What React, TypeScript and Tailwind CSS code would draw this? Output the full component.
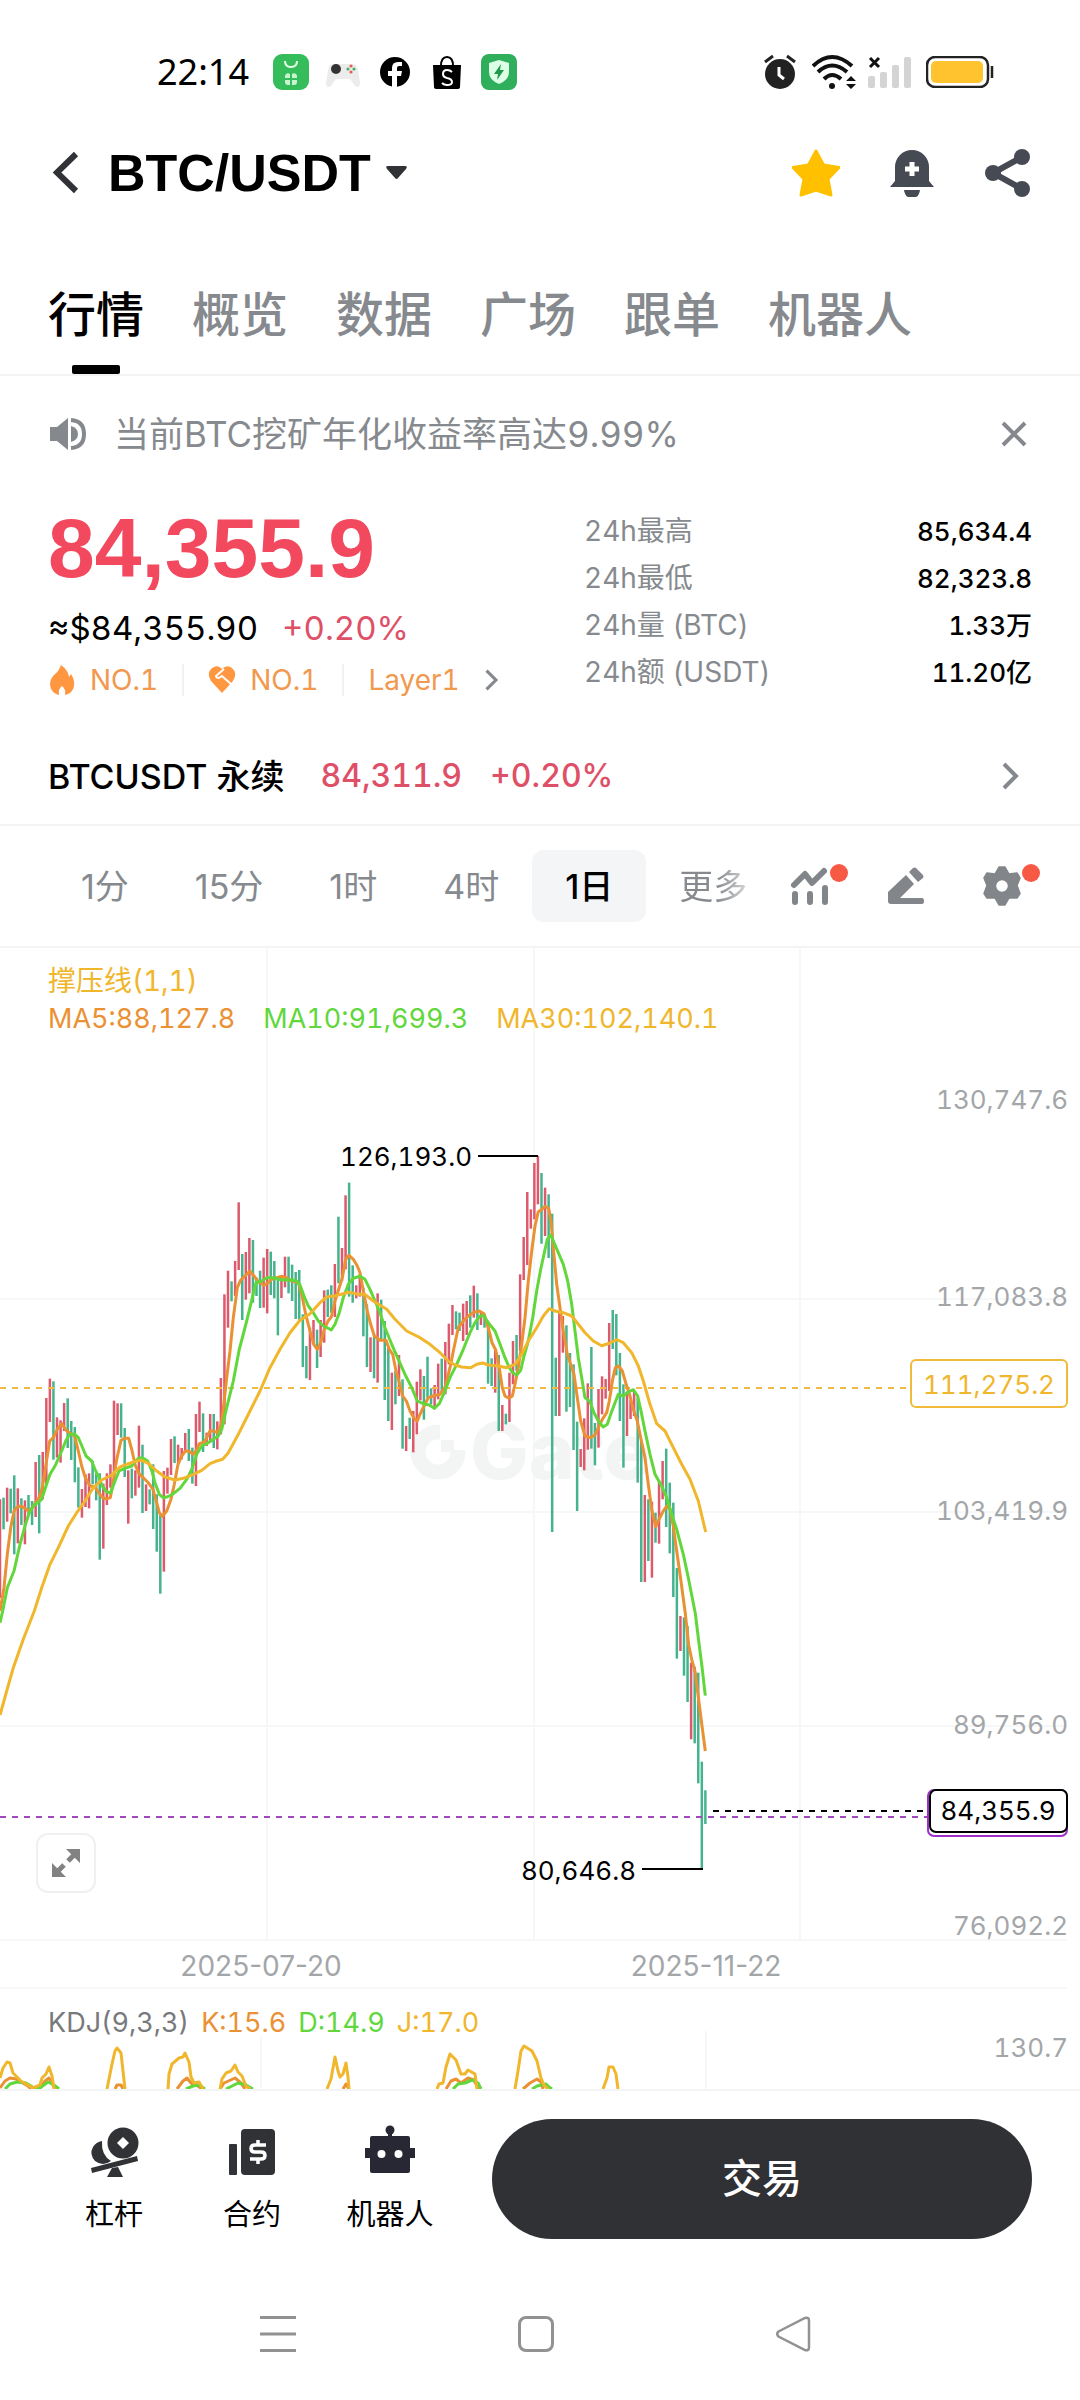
import { useState } from "react";
import clsx from "clsx";

type Point = [number, number];

// [high, low, up] per day, in plot units (3 units = 1px on a 1080 wide chart)
type Candle = [number, number, 0 | 1];

const CANDLES: Candle[] = [
  [1105, 1400, 1], [1100, 1195, 0], [1070, 1172, 1], [1073, 1147, 0], [1033, 1270, 0], [1072, 1237, 1],
  [1102, 1182, 0], [1108, 1240, 1], [1092, 1150, 0], [1110, 1182, 0], [993, 1158, 1], [972, 1207, 0],
  [963, 1105, 1], [801, 1060, 1], [743, 873, 1], [751, 986, 0], [859, 980, 1], [868, 995, 1],
  [816, 900, 1], [802, 951, 0], [870, 987, 0], [888, 1054, 0], [1009, 1130, 0], [1074, 1160, 1],
  [1030, 1128, 1], [1027, 1132, 1], [990, 1060, 0], [1027, 1108, 0], [1027, 1286, 0], [1058, 1253, 1],
  [1027, 1122, 1], [1000, 1070, 1], [809, 1030, 1], [817, 912, 1], [817, 920, 0], [891, 1038, 0],
  [1018, 1178, 1], [1013, 1102, 0], [1018, 1094, 1], [884, 1070, 1], [941, 1146, 0], [1060, 1140, 1],
  [1075, 1120, 0], [1000, 1194, 0], [1090, 1262, 0], [1150, 1388, 0], [1020, 1322, 1], [1010, 1088, 1],
  [924, 1032, 1], [916, 996, 0], [941, 1000, 1], [951, 985, 1], [906, 965, 1], [894, 990, 0],
  [950, 1058, 0], [849, 1065, 1], [812, 903, 1], [847, 963, 0], [905, 945, 1], [849, 935, 1],
  [849, 951, 0], [871, 955, 1], [741, 910, 1], [490, 880, 1], [419, 590, 1], [451, 511, 0],
  [390, 495, 1], [214, 417, 1], [369, 567, 0], [363, 506, 1], [321, 487, 1], [327, 515, 0],
  [440, 495, 0], [419, 531, 0], [380, 530, 1], [354, 547, 1], [362, 492, 0], [390, 502, 0],
  [440, 613, 0], [440, 501, 1], [377, 469, 1], [377, 487, 0], [401, 510, 0], [423, 564, 0],
  [417, 566, 0], [550, 708, 0], [645, 742, 0], [590, 747, 1], [567, 640, 1], [596, 711, 0],
  [567, 678, 1], [478, 635, 1], [476, 558, 0], [463, 545, 0], [399, 558, 1], [257, 457, 0],
  [351, 450, 1], [193, 415, 1], [155, 497, 0], [403, 515, 0], [463, 502, 1], [430, 497, 1],
  [470, 616, 0], [520, 708, 0], [619, 723, 1], [610, 742, 0], [487, 755, 1], [506, 630, 0],
  [570, 807, 0], [650, 870, 0], [725, 897, 1], [720, 820, 0], [672, 795, 1], [745, 953, 0],
  [885, 960, 1], [860, 924, 0], [840, 964, 1], [752, 910, 1], [715, 808, 1], [735, 866, 0],
  [677, 800, 0], [772, 820, 0], [762, 835, 1], [698, 805, 1], [683, 785, 0], [633, 790, 1],
  [578, 700, 1], [522, 612, 1], [541, 595, 0], [545, 600, 0], [518, 630, 1], [510, 612, 1],
  [493, 590, 0], [464, 560, 1], [487, 597, 0], [545, 582, 1], [550, 590, 0], [580, 758, 0],
  [682, 765, 0], [655, 785, 1], [672, 900, 0], [822, 900, 1], [848, 880, 0], [725, 873, 1],
  [630, 760, 1], [612, 720, 0], [430, 660, 1], [318, 447, 1], [183, 402, 1], [235, 293, 1],
  [96, 265, 1], [75, 220, 1], [126, 338, 0], [170, 315, 1], [190, 381, 0], [248, 1203, 0],
  [680, 855, 0], [540, 855, 1], [555, 665, 1], [583, 842, 0], [666, 828, 0], [700, 957, 0],
  [872, 1140, 0], [954, 1008, 1], [862, 1018, 1], [757, 956, 1], [648, 953, 0], [876, 1003, 0],
  [774, 950, 1], [736, 850, 1], [744, 803, 1], [576, 780, 1], [537, 654, 0], [549, 733, 0],
  [666, 870, 0], [760, 1010, 0], [782, 915, 1], [808, 864, 1], [780, 855, 1], [800, 1055, 0],
  [930, 1353, 0], [1092, 1353, 1], [1105, 1290, 0], [1112, 1340, 1], [1145, 1235, 0], [1050, 1238, 1],
  [990, 1105, 1], [953, 1188, 0], [1055, 1267, 0], [1115, 1398, 0], [1311, 1583, 0], [1455, 1560, 1],
  [1459, 1634, 0], [1485, 1713, 0], [1595, 1825, 1], [1607, 1837, 0], [1625, 1957, 0], [1892, 2213, 0],
  [1978, 2079, 0],
];

const MA5: Point[] = [
  [0, 1440], [12, 1370], [22, 1270], [32, 1190], [42, 1140], [52, 1128], [63, 1125], [75, 1132], [88, 1142],
  [100, 1125], [117, 1100], [127, 1070], [138, 1000], [149, 930], [160, 920], [172, 895], [185, 878],
  [200, 900], [213, 908], [224, 915], [235, 960], [245, 1005], [256, 1040], [270, 1065], [285, 1068],
  [296, 1085], [308, 1100], [320, 1104], [331, 1100], [338, 1060], [350, 985], [363, 928], [374, 922],
  [386, 922], [395, 955], [405, 1000], [417, 1028], [430, 1040], [445, 1055], [459, 1075], [470, 1115],
  [478, 1145], [487, 1156], [500, 1140], [513, 1105], [523, 1060], [534, 1000], [545, 975], [556, 960],
  [566, 960], [580, 970], [588, 960], [598, 938], [612, 934], [620, 920], [630, 900], [641, 900],
  [652, 905], [662, 885], [668, 850], [680, 740], [690, 660], [700, 560], [712, 470], [722, 447],
  [738, 432], [750, 420], [762, 435], [775, 452], [793, 463], [805, 455], [815, 445], [830, 440],
  [845, 436], [860, 440], [870, 448], [885, 452], [895, 455], [905, 490], [917, 550], [930, 600],
  [941, 640], [952, 655], [962, 635], [973, 595], [984, 570], [994, 558], [1005, 510], [1016, 475],
  [1027, 440], [1037, 385], [1047, 373], [1060, 385], [1072, 405], [1080, 425], [1090, 480], [1102, 540],
  [1112, 580], [1123, 615], [1140, 628], [1158, 628], [1168, 655], [1178, 670], [1188, 720], [1198, 755],
  [1208, 795], [1220, 812], [1230, 840], [1242, 862], [1252, 870], [1260, 850], [1272, 825], [1285, 800],
  [1300, 795], [1320, 790], [1335, 768], [1350, 710], [1362, 650], [1375, 590], [1390, 570], [1405, 555],
  [1422, 544], [1438, 540], [1452, 548], [1465, 590], [1476, 635], [1487, 657], [1497, 705], [1507, 770],
  [1515, 795], [1527, 802], [1537, 795], [1545, 760], [1555, 710], [1565, 640], [1575, 560], [1585, 450],
  [1595, 360], [1605, 285], [1615, 242], [1626, 235], [1635, 226], [1646, 232], [1653, 270], [1660, 350],
  [1670, 460], [1680, 530], [1690, 600], [1702, 670], [1712, 700], [1722, 730], [1732, 800], [1742, 870],
  [1755, 915], [1770, 920], [1785, 912], [1795, 890], [1807, 865], [1820, 845], [1828, 810], [1838, 745],
  [1846, 710], [1856, 705], [1867, 720], [1877, 755], [1890, 795], [1900, 835], [1912, 870], [1922, 920],
  [1935, 980], [1945, 1060], [1955, 1135], [1967, 1187], [1977, 1165], [1990, 1140], [2000, 1125],
  [2010, 1135], [2020, 1185], [2030, 1260], [2042, 1345], [2056, 1447], [2066, 1542], [2076, 1589],
  [2086, 1625], [2096, 1708], [2106, 1785], [2116, 1860],
];

const MA10: Point[] = [
  [0, 1475], [8, 1440], [22, 1370], [42, 1320], [60, 1240], [75, 1185], [88, 1145], [100, 1125], [125, 1105],
  [138, 1065], [150, 1030], [165, 1005], [185, 960], [197, 930], [208, 912], [222, 908], [235, 920],
  [247, 948], [258, 975], [275, 990], [285, 1015], [297, 1040], [307, 1065], [320, 1083], [332, 1085],
  [345, 1050], [357, 1020], [375, 1012], [395, 1005], [405, 992], [417, 980], [430, 982], [443, 990],
  [455, 1018], [465, 1055], [478, 1090], [490, 1100], [503, 1097], [520, 1088], [540, 1072], [560, 1045],
  [575, 1015], [590, 970], [605, 945], [620, 938], [640, 925], [655, 915], [665, 895], [680, 830],
  [700, 750], [718, 655], [740, 570], [757, 500], [768, 455], [785, 450], [800, 440], [820, 440],
  [845, 447], [870, 446], [890, 450], [900, 462], [912, 495], [925, 525], [940, 545], [955, 570],
  [970, 585], [985, 592], [994, 597], [1005, 580], [1018, 545], [1030, 500], [1045, 460], [1060, 442],
  [1080, 436], [1095, 445], [1110, 475], [1125, 510], [1140, 545], [1155, 590], [1175, 640], [1195, 685],
  [1215, 730], [1235, 770], [1252, 810], [1270, 818], [1288, 822], [1303, 832], [1318, 818], [1335, 780],
  [1350, 740], [1370, 700], [1390, 655], [1410, 605], [1425, 575], [1438, 557], [1450, 553], [1465, 575],
  [1485, 600], [1500, 640], [1515, 680], [1528, 710], [1538, 725], [1550, 732], [1562, 718], [1572, 675],
  [1585, 630], [1598, 560], [1610, 480], [1622, 415], [1632, 370], [1642, 325], [1652, 312], [1662, 335],
  [1675, 365], [1690, 400], [1703, 450], [1715, 520], [1725, 600], [1735, 680], [1745, 740], [1755, 800],
  [1770, 812], [1782, 845], [1795, 870], [1810, 888], [1822, 880], [1832, 850], [1845, 815], [1855, 790],
  [1870, 795], [1885, 783], [1900, 776], [1913, 795], [1923, 840], [1935, 900], [1950, 970], [1965, 1030],
  [1985, 1065], [2000, 1100], [2015, 1150], [2030, 1195], [2050, 1270], [2065, 1340], [2086, 1447],
  [2096, 1530], [2106, 1607], [2116, 1694],
];

const MA30: Point[] = [
  [0, 1752], [20, 1680], [40, 1610], [70, 1525], [103, 1440], [125, 1370], [150, 1300], [175, 1250],
  [205, 1185], [230, 1145], [255, 1110], [280, 1070], [305, 1047], [335, 1032], [360, 1008], [385, 998],
  [410, 990], [425, 988], [445, 997], [470, 1020], [495, 1038], [525, 1047], [550, 1042], [580, 1030],
  [605, 1018], [630, 998], [650, 990], [668, 985], [685, 965], [715, 910], [750, 840], [780, 780],
  [810, 710], [840, 655], [870, 605], [900, 568], [930, 548], [960, 515], [980, 498], [1005, 494],
  [1030, 488], [1045, 484], [1075, 490], [1095, 490], [1120, 510], [1160, 535], [1185, 565], [1220, 600],
  [1260, 620], [1290, 640], [1320, 665], [1345, 690], [1365, 702], [1385, 708], [1412, 710], [1430, 700],
  [1448, 696], [1465, 702], [1495, 705], [1520, 710], [1545, 700], [1565, 670], [1585, 630], [1610, 590],
  [1630, 555], [1648, 533], [1665, 540], [1690, 545], [1715, 555], [1735, 580], [1755, 605], [1780, 630],
  [1805, 644], [1830, 636], [1850, 626], [1870, 635], [1895, 665], [1915, 705], [1930, 750], [1950, 820],
  [1970, 878], [1995, 900], [2020, 950], [2045, 1000], [2070, 1045], [2095, 1110], [2117, 1203],
];

// KDJ leaves the visible strip several times, so every curve is a list of runs
const KDJ_J: Point[][] = [
  [[0, 125], [3, 115], [7, 109], [10, 110], [13, 120], [17, 124], [21, 128], [28, 132], [33, 135], [40, 132], [42, 125], [46, 121], [49, 114], [52, 123], [54, 136]],
  [[107, 136], [112, 111], [115, 98], [117, 95], [121, 100], [123, 118], [125, 136]],
  [[168, 136], [169, 121], [172, 111], [179, 105], [183, 104], [185, 100], [189, 109], [191, 124], [194, 130], [199, 129], [203, 136]],
  [[220, 136], [222, 126], [226, 120], [231, 118], [235, 112], [238, 119], [242, 123], [246, 133], [250, 136]],
  [[327, 136], [331, 126], [335, 104], [338, 118], [340, 124], [343, 121], [346, 110], [348, 124], [349, 136]],
  [[437, 136], [439, 131], [443, 130], [446, 114], [450, 101], [456, 107], [461, 121], [465, 121], [468, 117], [475, 121], [477, 136]],
  [[515, 136], [518, 118], [521, 98], [524, 93], [532, 98], [537, 108], [541, 125], [544, 132], [548, 136]],
  [[603, 136], [607, 125], [609, 114], [613, 114], [616, 121], [618, 136]],
];

const KDJ_K: Point[][] = [
  [[0, 135], [5, 128], [10, 125], [16, 126], [21, 129], [28, 133], [31, 136]],
  [[39, 136], [45, 128], [49, 125], [52, 130], [55, 136]],
  [[115, 136], [117, 132], [121, 132], [123, 136]],
  [[177, 136], [183, 128], [187, 125], [191, 130], [198, 133], [202, 136]],
  [[220, 136], [224, 130], [235, 125], [241, 130], [245, 136]],
  [[343, 136], [346, 131], [349, 136]],
  [[446, 136], [451, 128], [456, 126], [461, 130], [468, 125], [474, 127], [477, 133], [479, 136]],
  [[523, 136], [530, 130], [537, 126], [541, 129], [543, 136]],
];

const KDJ_D: Point[][] = [
  [[5, 136], [10, 131], [17, 129], [26, 130], [31, 133], [34, 135], [40, 135], [48, 129], [54, 132], [59, 136]],
  [[186, 136], [193, 133], [199, 132], [205, 136]],
  [[226, 136], [238, 130], [246, 132], [253, 136]],
  [[453, 136], [458, 131], [465, 130], [472, 127], [478, 130], [481, 136]],
  [[532, 136], [537, 133], [546, 131], [549, 134], [552, 136]],
];

const TABS = ["行情", "概览", "数据", "广场", "跟单", "机器人"];
const PERIODS = ["1分", "15分", "1时", "4时", "1日", "更多"];

const STATS = [
  { label: "24h最高", value: "85,634.4" },
  { label: "24h最低", value: "82,323.8" },
  { label: "24h量 (BTC)", value: "1.33万" },
  { label: "24h额 (USDT)", value: "11.20亿" },
];

const AXIS = [
  { y: 152, label: "130,747.6" },
  { y: 349, label: "117,083.8" },
  { y: 563, label: "103,419.9" },
  { y: 777, label: "89,756.0" },
  { y: 978, label: "76,092.2" },
];

const CANDLE_STEP = 3.5625;
const plotY = (v: number) => 183 + v / 3;
const toPoints = (points: Point[]) =>
  points.map(([x, y]) => `${(x / 3).toFixed(1)},${plotY(y).toFixed(1)}`).join(" ");
const toRun = (points: Point[]) => points.map(([x, y]) => `${x},${y - 60}`).join(" ");

const StatusBar = () => (
  <div className="flex h-36 items-center justify-between pr-[86px] pl-[157px]">
    <div className="flex items-center">
      <span className="font-['Noto_Sans','Noto_Sans_CJK_SC',sans-serif] text-[36px] leading-9">22:14</span>
      <svg className="ml-6 h-9 w-9" viewBox="0 0 36 36">
        <rect width="36" height="36" rx="9" fill="#35bd5b" />
        <path d="M12 7q0 6 6 6t6-6" fill="none" stroke="#e6ffe9" strokeWidth="2" />
        <path d="M12 24v-2a3 3 0 0 1 5-2v4zM19 24v-4a3 3 0 0 1 5 2v2zM12 26h5v5h-2a3 3 0 0 1-3-3zM19 26h5v2a3 3 0 0 1-3 3h-2z" fill="#c8f5cf" />
      </svg>
      <svg className="ml-4 h-9 w-9" viewBox="0 0 36 36">
        <path d="M8 10h20q4 0 5 6l2 13q0 4-3 4-2 0-4-4l-3-4H11l-3 4q-2 4-4 4-3 0-3-4l2-13q1-6 5-6z" fill="#ececed" />
        <circle cx="11" cy="15" r="5" fill="#333" />
        <circle cx="26" cy="12" r="1.6" fill="#e8604c" />
        <circle cx="26" cy="18" r="1.6" fill="#e8604c" />
        <circle cx="23" cy="15" r="1.6" fill="#45b06a" />
        <circle cx="29" cy="15" r="1.6" fill="#45b06a" />
      </svg>
      <svg className="ml-[18px] h-8 w-8" viewBox="0 0 32 32">
        <circle cx="16" cy="16" r="15" fill="#000" />
        <path d="M13 31V20H9v-5h4v-3q0-6 6-6h4v4h-3q-2 0-2 2v3h5l-1 5h-4v11z" fill="#fff" />
      </svg>
      <svg className="ml-5 h-9 w-8" viewBox="0 0 32 36">
        <path d="M2 11h28l-1 22q0 2-3 2H6q-3 0-3-2z" fill="#000" />
        <path d="M10 12q0-9 6-9t6 9" fill="none" stroke="#000" strokeWidth="2" />
        <path d="M21 18q-2-2-5-2-4 0-4 4 0 3 4 4 5 1 5 4 0 3-5 3-3 0-5-2" fill="none" stroke="#fff" strokeWidth="2" />
      </svg>
      <svg className="ml-[18px] h-9 w-9" viewBox="0 0 36 36">
        <rect width="36" height="36" rx="8" fill="#2fae5c" />
        <path d="M18 6l10 3v9q0 8-10 12Q8 26 8 18V9z" fill="#dcffe6" />
        <path d="M20 10l-7 10h4l-1 6 7-10h-4z" fill="#1f9a4c" />
      </svg>
    </div>

    <div className="flex items-center">
      <svg className="h-9 w-8" viewBox="0 0 32 36">
        <circle cx="16" cy="20" r="15" fill="#222" />
        <path d="M1 8l8-6M31 8l-8-6" stroke="#222" strokeWidth="3" />
        <path d="M15 13v8l5 4" fill="none" stroke="#fff" strokeWidth="3" />
      </svg>
      <svg className="ml-4 h-9 w-11" viewBox="0 0 44 36">
        <g fill="none" stroke="#111" strokeWidth="4">
          <path d="M1 12q19-18 39 0" />
          <path d="M6 18q14-13 29 0" />
          <path d="M12 25q8-8 17 0" />
        </g>
        <circle cx="20" cy="32" r="3" fill="#111" />
        <path d="M34 27l5-5 5 5zM34 30l5 5 5-5z" fill="#111" />
      </svg>
      <svg className="ml-3 h-9 w-11" viewBox="0 0 44 36">
        <path d="M2 4l9 9M11 4l-9 9" stroke="#111" strokeWidth="3" />
        <g fill="#d4d4d4">
          <rect x="0" y="22" width="7" height="12" rx="2" />
          <rect x="12" y="18" width="7" height="16" rx="2" />
          <rect x="24" y="11" width="7" height="23" rx="2" />
          <rect x="36" y="3" width="7" height="31" rx="2" />
        </g>
      </svg>
      <svg className="ml-3.5 h-8 w-[68px]" viewBox="0 0 68 32">
        <rect x="1" y="1" width="61" height="30" rx="8" fill="#fff" stroke="#222" strokeWidth="2.5" />
        <rect x="5" y="5" width="52" height="22" rx="5" fill="#ffc330" />
        <path d="M66 10v12" stroke="#222" strokeWidth="2.5" />
      </svg>
    </div>
  </div>
);

const Header = () => (
  <header className="flex h-[58px] items-center pr-12 pl-12">
    <button type="button" aria-label="返回" className="mr-6 h-12 w-9">
      <svg className="h-12 w-9" viewBox="0 0 36 48">
        <path d="M28 5L9 23.500l19 18.500" fill="none" stroke="#303236" strokeWidth="6" />
      </svg>
    </button>
    <button type="button" className="flex items-center gap-3.5">
      <span className="font-['Liberation_Sans','Noto_Sans_CJK_SC',sans-serif] text-[52px] leading-[58px] font-bold">
        BTC/USDT
      </span>
      <svg className="h-5 w-[23px]" viewBox="0 0 23 20">
        <path d="M3 3h17q3 0 1 3l-8 9q-1.500 2-3 0L2 6q-2-3 1-3z" fill="#303236" />
      </svg>
    </button>
    <div className="ml-auto flex gap-12">
      <button type="button" aria-label="自选" className="h-12 w-12">
        <svg className="h-12 w-12" viewBox="1 2 48 48">
          <path
            d="M25 4l7.500 14L48 20.500 37 32l3 16L25 43 10 48l3-16L2 20.500 17.500 18z"
            fill="#ffc000"
            stroke="#ffc000"
            strokeWidth="3"
            strokeLinejoin="round"
          />
        </svg>
      </button>
      <button type="button" aria-label="提醒" className="h-12 w-12">
        <svg className="h-12 w-12" viewBox="0 0 48 48">
          <path d="M7 18a17 17 0 0 1 34 0v14l5 6H2l5-6z" fill="#464a52" />
          <path d="M16 41h16q-1 8-8 8t-8-8z" fill="#464a52" />
          <path d="M24 13v14M17 20h14" stroke="#fff" strokeWidth="5" />
        </svg>
      </button>
      <button type="button" aria-label="分享" className="h-12 w-12">
        <svg className="h-12 w-12" viewBox="0 0 48 48">
          <path d="M38 8L9 24l29 16" fill="none" stroke="#464a52" strokeWidth="6" />
          <circle cx="38" cy="8" r="8" fill="#464a52" />
          <circle cx="9" cy="24" r="8" fill="#464a52" />
          <circle cx="38" cy="40" r="8" fill="#464a52" />
        </svg>
      </button>
    </div>
  </header>
);

const ChevronRight = ({ className }: { className?: string }) => (
  <svg className={className} viewBox="0 0 18 28">
    <path d="M2 2l12 12L2 26" fill="none" stroke="#85888c" strokeWidth="4" />
  </svg>
);

const PriceSummary = () => (
  <section className="flex justify-between px-12 pt-4">
    <div>
      <div className="font-['Liberation_Sans','Noto_Sans_CJK_SC',sans-serif] text-[84px] leading-[80px] font-bold text-[#f2495e]">
        84,355.9
      </div>
      <div className="mt-5 flex gap-6 text-[33px] leading-10">
        <span>≈$84,355.90</span>
        <span className="text-[#de5068]">+0.20%</span>
      </div>
      <a href="#rank" className="mt-4 flex items-center text-[28px] leading-8 text-[#f0994f]">
        <svg className="mr-3.5 h-8 w-7" viewBox="0 0 28 32">
          <path d="M13 1q7 5 8 12l2-3q4 6 3 12-1 7-9 9 1-6-3-9-4 3-3 9-8-2-9-10 0-6 4-10 5-4 7-10z" fill="#ff9640" />
        </svg>
        NO.1
        <span className="mr-6 ml-6 h-8 w-0.5 bg-[#f1f2f3]" />
        <svg className="mr-3.5 h-8 w-7" viewBox="0 0 28 32">
          <path d="M14 29L3 17Q-2 9 4 4q6-4 10 1 5-5 10-1 6 5 1 13z" fill="#ff9640" />
          <path d="M16 5l-8 7q1 4 6 0l9 8" fill="none" stroke="#fff" strokeWidth="2" />
        </svg>
        NO.1
        <span className="mr-6 ml-6 h-8 w-0.5 bg-[#f1f2f3]" />
        Layer1
        <ChevronRight className="ml-6 h-[22px] w-4" />
      </a>
    </div>
    <dl className="w-[448px]">
      {STATS.map((stat) => (
        <div key={stat.label} className="flex justify-between leading-[47px]">
          <dt className="text-[28px] text-[#868a8e]">{stat.label}</dt>
          <dd className="text-[26px] font-medium">{stat.value}</dd>
        </div>
      ))}
    </dl>
  </section>
);

const PeriodBar = () => {
  const [period, setPeriod] = useState("1日");

  return (
    <div className="flex h-[122px] items-center justify-between border-b-2 border-[#f3f4f5] pr-[54px] pl-12">
      <div className="flex items-center proportional-nums">
        {PERIODS.map((item) => (
          <button
            key={item}
            type="button"
            onClick={() => setPeriod(item)}
            className={clsx(
              "h-[72px] rounded-xl text-[34px]",
              item === "更多"
                ? "bg-linear-to-r from-[#868a8e] from-70% to-[#d5d6d8] bg-clip-text pl-[33px] text-transparent"
                : "px-[33px]",
              item === period ? "bg-[#f4f5f7] font-medium text-black" : "text-[#868a8e]"
            )}
          >
            {item}
          </button>
        ))}
      </div>
      <div className="flex gap-12">
        <button type="button" aria-label="指标" className="relative h-12 w-12">
          <svg className="h-12 w-12" viewBox="0 0 48 48">
            <g fill="none" stroke="#82868a" strokeWidth="6" strokeLinecap="round" strokeLinejoin="round">
              <path d="M8 23L19 12l7 9L38 9" />
              <path d="M9 32v8M24 32v8M39 26v14" />
            </g>
          </svg>
          <span className="absolute top-0.5 left-11 h-[18px] w-[18px] rounded-full bg-[#f65a45]" />
        </button>
        <button type="button" aria-label="画线" className="h-12 w-12">
          <svg className="h-12 w-12" viewBox="0 0 48 48">
            <path d="M6 30L24 13l8 9-14 14h22q2 0 2 3t-2 3H9q-3 0-3-3zM27 10l4-4q2-1 3 0l7 7q1 2 0 3l-5 4z" fill="#82868a" />
          </svg>
        </button>
        <button type="button" aria-label="设置" className="relative h-12 w-12">
          <svg className="h-12 w-12" viewBox="0 0 48 48">
            <path
              fillRule="evenodd"
              d="M21 5h6l4 7 8-1 3 5-3 7.500 3 8-3 4.500-8 0-4 7h-6l-4-7h-8l-3-4.500 3-8L6 16l3-5 8 1zM24 17.500a6.500 6.500 0 1 0 0 13 6.500 6.500 0 1 0 0-13z"
              fill="#82868a"
              stroke="#82868a"
              strokeWidth="1.500"
              strokeLinejoin="round"
            />
          </svg>
          <span className="absolute top-0.5 left-11 h-[18px] w-[18px] rounded-full bg-[#f65a45]" />
        </button>
      </div>
    </div>
  );
};

const PriceChart = () => (
  <section className="relative">
    <svg className="block w-full" viewBox="0 0 1080 1041" fontSize="26">
      <g stroke="#f6f7f8" strokeWidth="2">
        <path d="M267 0V992M534 0V992M800 0V992" />
        <path d="M0 351H1067M0 564H1067M0 778H1067M0 992H1067M0 1040H1067" />
      </g>

      <g>
        <circle cx="438" cy="504" r="20" fill="none" stroke="#f3f5f5" strokeWidth="15" />
        <path d="M440 476h26v26h-26z" fill="#fff" />
        <path d="M441 492h13v12h-13z" fill="#f3f5f5" />
        <text x="470" y="531" fontSize="78" fontWeight="800" fill="#f3f5f5">
          Gate
        </text>
      </g>

      {AXIS.map((tick) => (
        <text key={tick.label} x="1068" y={tick.y + 9} textAnchor="end" fill="#a3a6a9">
          {tick.label}
        </text>
      ))}

      {CANDLES.map(([high, low, up], i) => (
        <line
          key={i}
          x1={i * CANDLE_STEP}
          x2={i * CANDLE_STEP}
          y1={plotY(high)}
          y2={plotY(low)}
          stroke={up ? "#dc5a6c" : "#45b38c"}
          strokeWidth="2.500"
        />
      ))}

      <path d="M0 440H909" stroke="#f0bb45" strokeWidth="2" strokeDasharray="6 6" />
      <path d="M0 869H928" stroke="#a047c0" strokeWidth="2" strokeDasharray="6 6" />
      <path d="M713 863H928" stroke="#000" strokeWidth="2" strokeDasharray="6 6" />

      <g fill="none" strokeWidth="3" strokeLinejoin="round">
        <polyline points={toPoints(MA5)} stroke="#ea9133" />
        <polyline points={toPoints(MA10)} stroke="#61d73c" />
        <polyline points={toPoints(MA30)} stroke="#f0b62c" />
      </g>

      <path d="M478 208h60M642 921h61" stroke="#000" strokeWidth="2" />
      <text x="472" y="218" textAnchor="end">126,193.0</text>
      <text x="636" y="932" textAnchor="end">80,646.8</text>

      <rect x="911" y="412" width="156" height="47" rx="5" fill="#fff" stroke="#f0bb3a" strokeWidth="2" />
      <text x="989" y="446" textAnchor="middle" fill="#f0b62c">111,275.2</text>
      <rect x="928" y="842" width="139" height="46" rx="6" fill="#fff" stroke="#a02fc8" strokeWidth="2" />
      <rect x="930" y="842" width="137" height="42" rx="6" fill="#fff" stroke="#000" strokeWidth="2" />
      <text x="998" y="872" textAnchor="middle">84,355.9</text>

      <g className="proportional-nums" fontSize="28" fill="#a3a6a9" textAnchor="middle">
        <text x="261" y="1028">2025-07-20</text>
        <text x="706" y="1028">2025-11-22</text>
      </g>
    </svg>

    <div className="absolute top-3.5 left-12 text-[27px] leading-[38px]">
      <div className="text-[28px] text-[#f0b62c]">撑压线(1,1)</div>
      <div className="flex gap-7">
        <span className="text-[#ea9133]">MA5:88,127.8</span>
        <span className="text-[#61d73c]">MA10:91,699.3</span>
        <span className="text-[#f0b62c]">MA30:102,140.1</span>
      </div>
    </div>

    <button
      type="button"
      aria-label="全屏"
      className="absolute bottom-24 left-9 h-[60px] w-[60px] rounded-xl border-2 border-[#f0f0f1] bg-white"
    >
      <svg className="h-14 w-14" viewBox="0 0 56 56">
        <path d="M28 14h14v14zM14 28v14h14z" fill="#828282" />
        <path d="M30 26l7-7M26 30l-7 7" stroke="#828282" strokeWidth="5" />
      </svg>
    </button>
  </section>
);

const KdjChart = () => (
  <section className="relative border-b-2 border-[#f3f4f5]">
    <svg className="block w-full" viewBox="0 0 1080 100" fontSize="26">
      <path d="M261 48V100M706 42V100" stroke="#f6f7f8" strokeWidth="2" />
      <g fill="none" strokeWidth="3" strokeLinejoin="round" transform="translate(0 24)">
        {KDJ_K.map((run, i) => (
          <polyline key={i} points={toRun(run)} stroke="#ea9133" />
        ))}
        {KDJ_D.map((run, i) => (
          <polyline key={i} points={toRun(run)} stroke="#61d73c" />
        ))}
        {KDJ_J.map((run, i) => (
          <polyline key={i} points={toRun(run)} stroke="#f0b62c" />
        ))}
      </g>
      <text x="1068" y="68" textAnchor="end" fill="#a3a6a9">130.7</text>
    </svg>
    <div className="absolute top-4 left-12 flex gap-3 text-[27px] leading-9">
      <span className="text-[#77797c]">KDJ(9,3,3)</span>
      <span className="text-[#ea9133]">K:15.6</span>
      <span className="text-[#61d73c]">D:14.9</span>
      <span className="text-[#f0b62c]">J:17.0</span>
    </div>
  </section>
);

const BottomBar = () => (
  <div className="flex items-center pt-7 pr-12 pl-[45px]">
    <button type="button" className="flex w-[138px] flex-col items-center gap-5 text-[29px] leading-9">
      <svg className="h-[52px] w-[52px]" viewBox="0 0 52 52">
        <circle cx="35" cy="18" r="15.500" fill="#303236" />
        <path d="M35 12l6 6-6 6-6-6z" fill="#fff" />
        <path d="M14 16q-1 14 9 20-8 6-16 0-6-7-2-14 3-5 9-6z" fill="#303236" />
        <path d="M4 48l-1-5 46-12 1 5z" fill="#303236" />
        <path d="M24 43l6-1 5 10H19z" fill="#303236" />
      </svg>
      杠杆
    </button>
    <button type="button" className="flex w-[138px] flex-col items-center gap-5 text-[29px] leading-9">
      <svg className="h-[52px] w-[52px]" viewBox="0 0 52 52">
        <rect x="3" y="19" width="8" height="31" rx="1" fill="#303236" />
        <rect x="15" y="4" width="34" height="46" rx="4" fill="#303236" />
        <path
          d="M40 20h-11q-4 0-4 3.500t4 3.500h6q4 0 4 3.500t-4 3.500H24M32 15v5M32 34v5"
          fill="none"
          stroke="#fff"
          strokeWidth="3.500"
        />
      </svg>
      合约
    </button>
    <button type="button" className="flex w-[138px] flex-col items-center gap-5 text-[29px] leading-9">
      <svg className="h-[52px] w-[52px]" viewBox="0 0 52 52">
        <circle cx="26" cy="5" r="4.500" fill="#272833" />
        <path d="M24 6h4v6h-4z" fill="#272833" />
        <path d="M8 11h36q2 0 2 2v10h5v10h-5v13q0 2-2 2H8q-2 0-2-2V33H1V23h5V13q0-2 2-2z" fill="#272833" />
        <circle cx="17.500" cy="29" r="4" fill="#fff" />
        <circle cx="34.500" cy="29" r="4" fill="#fff" />
      </svg>
      机器人
    </button>
    <button type="button" className="ml-[33px] h-[120px] flex-1 rounded-full bg-[#303134] text-[40px] font-medium text-white">
      交易
    </button>
  </div>
);

const SystemNav = () => (
  <nav className="flex justify-center gap-[222px] pt-[77px] pr-2 pb-12">
    <button type="button" aria-label="最近任务" className="h-9 w-9">
      <svg className="h-9 w-9" viewBox="0 0 36 36">
        <path d="M0 1.500h36M0 18h36M0 34.500h36" stroke="#929292" strokeWidth="3" />
      </svg>
    </button>
    <button type="button" aria-label="主屏幕" className="h-9 w-9 rounded-lg border-3 border-[#929292]" />
    <button type="button" aria-label="返回" className="h-9 w-9">
      <svg className="h-9 w-9" viewBox="0 0 36 36">
        <path d="M2.500 15.500L29 2q4-1 4 2.500v27q0 3.500-4 2.500L2.500 20.500q-2.500-2.500 0-5z" fill="none" stroke="#929292" strokeWidth="2.500" />
      </svg>
    </button>
  </nav>
);

export default function App() {
  const [tab, setTab] = useState("行情");
  const [showNotice, setShowNotice] = useState(true);

  return (
    <div className="w-full bg-white font-['Inter','Noto_Sans_CJK_SC',sans-serif] text-black tabular-nums">
      <StatusBar />
      <Header />

      <nav className="mt-12 flex h-[126px] items-stretch gap-12 border-b-2 border-[#f3f4f5] px-12">
        {TABS.map((item) => (
          <button
            key={item}
            type="button"
            onClick={() => setTab(item)}
            className={clsx(
              "flex flex-col items-center justify-between pt-[41px] text-[48px] leading-12 font-medium",
              item === tab ? "text-black" : "text-[#868a8e]"
            )}
          >
            {item}
            {item === tab && <span className="h-[9px] w-12 rounded-xs bg-black" />}
          </button>
        ))}
      </nav>

      {showNotice && (
        <div className="flex h-[116px] items-center px-12 text-[#868a8e]">
          <svg className="mr-[26px] h-10 w-10" viewBox="0 0 40 40">
            <path d="M2 13h7l11-9v32l-11-9H2z" fill="#85888c" />
            <path d="M23 12q7 2 7 8t-7 8z" fill="#85888c" />
            <path d="M23 6q13 1 13 14T23 34" fill="none" stroke="#85888c" strokeWidth="4" />
          </svg>
          <p className="text-[35px]">当前BTC挖矿年化收益率高达9.99%</p>
          <button type="button" aria-label="关闭" className="ml-auto h-9 w-9" onClick={() => setShowNotice(false)}>
            <svg className="h-9 w-9" viewBox="0 0 36 36">
              <path d="M7 7l22 22M29 7L7 29" stroke="#85888c" strokeWidth="4" />
            </svg>
          </button>
        </div>
      )}

      <PriceSummary />

      <a
        href="#perpetual"
        className="mt-8 flex h-[98px] items-center border-b-2 border-[#f3f4f5] px-12 text-[34px] font-medium"
      >
        BTCUSDT 永续
        <span className="ml-9 text-[32px] text-[#de5068]">84,311.9</span>
        <span className="ml-7 text-[32px] text-[#de5068]">+0.20%</span>
        <ChevronRight className="mr-3 ml-auto h-7 w-[18px]" />
      </a>

      <PeriodBar />
      <PriceChart />
      <KdjChart />
      <BottomBar />
      <SystemNav />
    </div>
  );
}
